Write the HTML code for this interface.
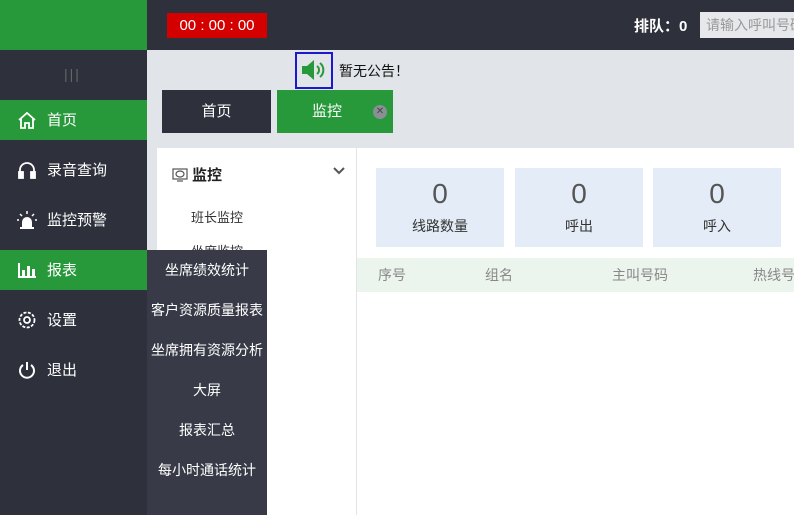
<!DOCTYPE html>
<html><head><meta charset="utf-8"><style>
*{margin:0;padding:0;box-sizing:border-box}
body{width:794px;height:515px;overflow:hidden;position:relative;background:#e1e4e8;font-family:"Liberation Sans","Noto Sans CJK SC",sans-serif;font-size:14px}
.a{position:absolute}
.side{left:0;top:0;width:147px;height:515px;background:#2e313c}
.nav{left:0;width:147px;height:40px;color:#fff;font-size:15px;line-height:41px;padding-left:47px}
.g{background:#27993b}
.ic{position:absolute;left:17px;top:11px;width:20px;height:18px}
.dd{left:147px;top:250px;width:120px;height:265px;background:#383b47}
.dd div{height:40px;line-height:40px;text-align:center;color:#fff;font-size:14px}
.card{top:168px;width:128px;height:79px;background:#e3ecf7;text-align:center;color:#555}
.card b{display:block;font-weight:normal;font-size:28px;margin-top:10px;color:#555}
.card span{display:block;font-size:14px;margin-top:6px;color:#333}
</style></head><body>
<div class="a side"></div>
<div class="a g" style="left:0;top:0;width:147px;height:50px"></div>
<div class="a" style="left:147px;top:0;width:647px;height:50px;background:#2e313c"></div>
<div class="a" style="left:167px;top:13px;width:100px;height:25px;background:#d40000;color:#fff;text-align:center;line-height:25px;font-size:15px">00 : 00 : 00</div>
<div class="a" style="left:634px;top:15px;color:#fff;font-size:15px;font-weight:bold">排队：0</div>
<div class="a" style="left:700px;top:12px;width:94px;height:26px;background:#e6e8eb;color:#999;font-size:14px;line-height:26px;padding-left:6px;white-space:nowrap;overflow:hidden">请输入呼叫号码</div>
<div class="a" style="left:64px;top:66px;color:#666;font-size:14px;letter-spacing:2px">|||</div>
<div class="a nav g" style="top:100px"><svg class="ic" viewBox="0 0 20 18" fill="none" stroke="#fff" stroke-width="1.8"><path d="M2 9L10 2l8 7M4 7v10h4v-5h4v5h4V7"/></svg>首页</div>
<div class="a nav" style="top:150px"><svg class="ic" viewBox="0 0 20 18" fill="none" stroke="#fff" stroke-width="1.8"><path d="M3 12V9a7 7 0 0114 0v3"/><rect x="2" y="11" width="4" height="6" fill="#fff"/><rect x="14" y="11" width="4" height="6" fill="#fff"/></svg>录音查询</div>
<div class="a nav" style="top:200px"><svg class="ic" viewBox="0 0 20 18" fill="#fff"><path d="M5 16V11a5 5 0 0110 0v5z"/><rect x="3" y="16" width="14" height="2"/><path d="M10 0v3M3 3l2 2M17 3l-2 2M0 9h2M18 9h2" stroke="#fff" stroke-width="1.5"/></svg>监控预警</div>
<div class="a nav g" style="top:250px"><svg class="ic" viewBox="0 0 20 18" fill="#fff"><rect x="1" y="2" width="2" height="15"/><rect x="1" y="15" width="18" height="2"/><rect x="5" y="9" width="3" height="6"/><rect x="10" y="5" width="3" height="10"/><rect x="15" y="8" width="3" height="7"/></svg>报表</div>
<div class="a nav" style="top:300px"><svg class="ic" viewBox="0 0 20 18" fill="none" stroke="#fff" stroke-width="1.8"><circle cx="10" cy="9" r="3"/><circle cx="10" cy="9" r="7.5" stroke-dasharray="3 1.5"/></svg>设置</div>
<div class="a nav" style="top:350px"><svg class="ic" viewBox="0 0 20 18" fill="none" stroke="#fff" stroke-width="2"><path d="M6 4a7 7 0 108 0M10 1v8"/></svg>退出</div>
<div class="a" style="left:295px;top:52px;width:38px;height:37px;border:2px solid #1a1acc"></div>
<svg class="a" style="left:300px;top:58px" width="28" height="24" viewBox="0 0 28 24"><path d="M2 8h5l7-6v20l-7-6H2z" fill="#27993b"/><path d="M17 8a5 5 0 010 8M20 5a9 9 0 010 14" stroke="#27993b" stroke-width="2" fill="none"/></svg>
<div class="a" style="left:339px;top:61px;font-size:14px;color:#111">暂无公告！</div>
<div class="a" style="left:162px;top:90px;width:109px;height:43px;background:#2e313c;color:#fff;text-align:center;line-height:43px;font-size:15px">首页</div>
<div class="a" style="left:277px;top:90px;width:116px;height:43px;background:#27993b;color:#fff;line-height:43px;font-size:15px;padding-left:35px">监控</div>
<div class="a" style="left:373px;top:105px;width:14px;height:14px;border-radius:50%;background:#8a8f96;color:#444;font-size:10px;line-height:14px;text-align:center">✕</div>
<div class="a" style="left:157px;top:148px;width:199px;height:367px;background:#fff"></div>
<div class="a" style="left:357px;top:148px;width:437px;height:367px;background:#fff"></div>
<svg class="a" style="left:172px;top:168px" width="16" height="14" viewBox="0 0 16 14" fill="none" stroke="#555" stroke-width="1.2"><rect x="1" y="1" width="14" height="10"/><ellipse cx="8" cy="6" rx="4" ry="3"/><path d="M5 13h6"/></svg>
<div class="a" style="left:192px;top:164px;font-size:15px;font-weight:bold;color:#222">监控</div>
<svg class="a" style="left:333px;top:167px" width="12" height="8" viewBox="0 0 12 8" fill="none" stroke="#555" stroke-width="2"><path d="M1 1l5 5 5-5"/></svg>
<div class="a" style="left:191px;top:207px;font-size:13px;color:#333">班长监控</div>
<div class="a" style="left:191px;top:241px;font-size:13px;color:#333">坐席监控</div>
<div class="a card" style="left:376px"><b>0</b><span>线路数量</span></div>
<div class="a card" style="left:515px"><b>0</b><span>呼出</span></div>
<div class="a card" style="left:653px"><b>0</b><span>呼入</span></div>
<div class="a" style="left:357px;top:258px;width:437px;height:34px;background:#ecf4ee;color:#888;font-size:14px;line-height:34px">
<span class="a" style="left:21px">序号</span><span class="a" style="left:128px">组名</span><span class="a" style="left:255px">主叫号码</span><span class="a" style="left:396px;white-space:nowrap">热线号码</span></div>
<div class="a dd"><div>坐席绩效统计</div><div>客户资源质量报表</div><div>坐席拥有资源分析</div><div>大屏</div><div>报表汇总</div><div>每小时通话统计</div></div>
</body></html>
